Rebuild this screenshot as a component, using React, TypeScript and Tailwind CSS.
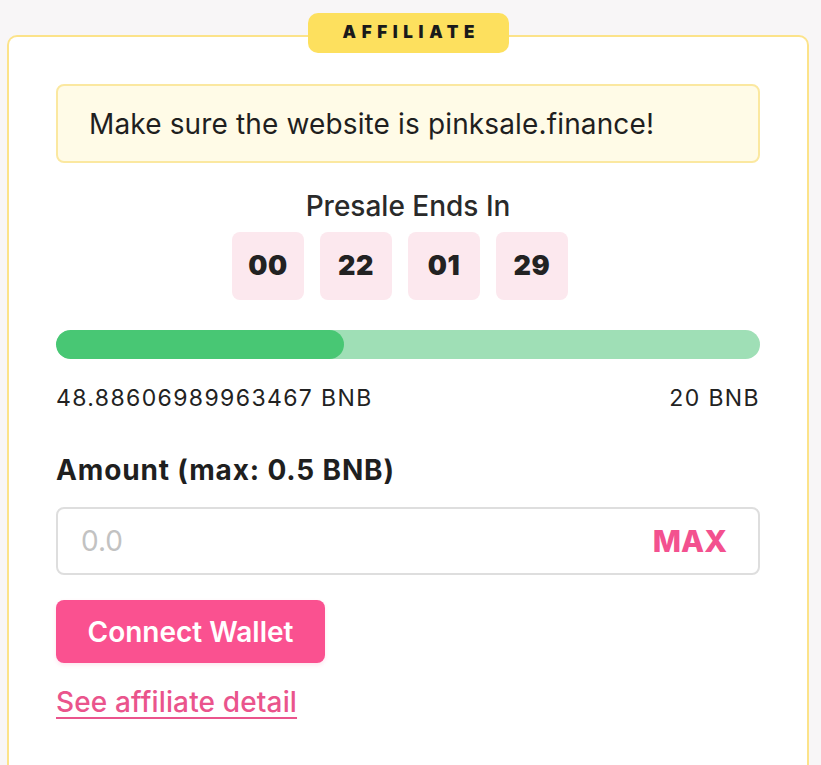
import { useState } from "react";

const countdown = ["00", "22", "01", "29"];

export default function App() {
  const [amount, setAmount] = useState("");

  return (
    <div className="min-h-screen h-[765px] overflow-hidden bg-[#f8f6f7] pt-[35px] pl-[7px] font-['Inter',_'Liberation_Sans',_sans-serif] text-[#222]">
      <div className="relative w-[802px] h-[760px] bg-white border-2 border-b-0 border-[#fce38a] rounded-t-[10px] px-[47px] pt-[47px]">
        {/* badge */}
        <div className="absolute left-[299px] -top-[24px] w-[201px] h-[40px] rounded-[10px] bg-[#fde05e] flex items-center justify-center">
          <span className="text-[17px] font-black tracking-[0.33em] pl-[0.33em] text-[#1a1a1a]">AFFILIATE</span>
        </div>

        {/* warning */}
        <div className="h-[79px] rounded-[8px] border-2 border-[#fbe8a0] bg-[#fffbe7] flex items-center pl-[31px]">
          <p className="text-[28px] tracking-[0.005em] text-[#1f1f1f]">Make sure the website is pinksale.finance!</p>
        </div>

        {/* countdown */}
        <div className="mt-[26px] flex flex-col items-center">
          <p className="text-[28px] font-medium leading-[34px] text-[#2a2a2a]">Presale Ends In</p>
          <div className="mt-[9px] flex">
            {countdown.map((n) => (
              <div key={n} className="mr-[16px] w-[72px] h-[68px] rounded-[8px] bg-[#fce8ee] flex items-center justify-center">
                <span className="text-[27px] font-black tracking-[0.02em] text-[#222]">{n}</span>
              </div>
            ))}
          </div>
        </div>

        {/* progress */}
        <div className="mt-[30px] h-[29px] rounded-full bg-[#9fdfb6] overflow-hidden">
          <div className="h-full rounded-full bg-[#48c774]" style={{ width: `${(288 / 704) * 100}%` }} />
        </div>
        <div className="mt-[25px] flex justify-between text-[23px] tracking-[0.06em] leading-[28px] text-[#222]">
          <span>48.88606989963467 BNB</span>
          <span>20 BNB</span>
        </div>

        {/* amount */}
        <p className="mt-[42px] text-[28px] font-bold tracking-[0.03em] leading-[32px] text-[#1f1f1f]">Amount (max: 0.5 BNB)</p>
        <div className="mt-[21px] h-[68px] rounded-[8px] border-2 border-[#dedede] flex items-center pl-[23px] pr-[31px]">
          <input
            value={amount}
            onChange={(e) => setAmount(e.target.value)}
            placeholder="0.0"
            className="flex-1 bg-transparent outline-none text-[28px] text-[#222] placeholder:text-[#c2c2c2]"
          />
          <button className="text-[30px] font-extrabold text-[#f3518f]">MAX</button>
        </div>

        {/* actions */}
        <button className="mt-[25px] w-[269px] h-[63px] rounded-[8px] bg-[#fa5190] text-white text-[28px] font-semibold shadow-[0_2px_4px_rgba(250,81,144,0.15)]">
          Connect Wallet
        </button>
        <div className="mt-[22px] leading-[34px]">
          <a href="#" className="text-[28px] font-medium tracking-[0.005em] text-[#ea548c] underline underline-offset-[5px] decoration-2">
            See affiliate detail
          </a>
        </div>
      </div>
    </div>
  );
}
